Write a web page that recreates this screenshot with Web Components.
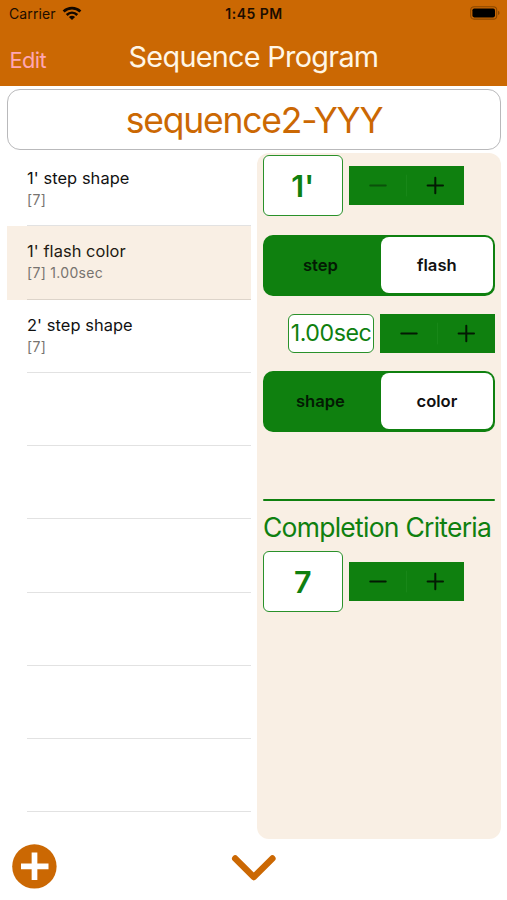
<!DOCTYPE html>
<html lang="en">
<head>
<meta charset="utf-8">
<title>Sequence Program</title>
<style>
  html, body { margin: 0; height: 100%; background: #fff; }
  body { font-family: Inter, "Liberation Sans", sans-serif; overflow: hidden; }
</style>
</head>
<body>
<sequence-app></sequence-app>
<script>
const define = (name, html) => {
  const template = document.createElement('template');
  template.innerHTML = html;
  customElements.define(name, class extends HTMLElement {
    constructor() {
      super();
      this.attachShadow({ mode: 'open' }).append(template.content.cloneNode(true));
    }
  });
};

define('status-bar', `
<style>
  :host { display: grid; grid-template-columns: 1fr auto 1fr; align-items: center; height: 27px; padding: 0 7px 0 9px; color: #1b0d00; font-size: 14px; line-height: 27px; box-sizing: border-box; }
  .left { display: flex; align-items: center; gap: 6px; letter-spacing: .1px; }
  .left svg { margin-top: -1px; }
  .time { font-weight: 600; font-size: 14px; letter-spacing: .5px; margin-right: 1px; }
  .battery { justify-self: end; margin-top: -1px; }
  svg { display: block; }
</style>
<div class="left"><span>Carrier</span>
  <svg width="20" height="15" viewBox="0 0 20 15" fill="none" stroke="#120800" stroke-width="2.7">
    <path d="M1.6 5.4C6.5 .9 13.5 .9 18.4 5.4"/><path d="M4.7 8.9C7.8 6 12.2 6 15.3 8.9"/>
    <path d="M10 14 6.9 10.9Q10 8.4 13.1 10.9Z" fill="#120800" stroke="none"/>
  </svg></div>
<span class="time">1:45 PM</span>
<svg class="battery" width="30" height="14" viewBox="0 0 30 14">
  <rect x=".7" y=".7" width="26" height="12.4" rx="3.4" fill="none" stroke="#8a4700" stroke-width="1.1"/>
  <rect x="2.4" y="2.4" width="22.6" height="9" rx="1.8" fill="#000"/>
  <path d="M28 4.7q1.6.6 1.6 2.2T28 9.1z" fill="#8a4700"/>
</svg>`);

define('nav-bar', `
<style>
  :host { display: grid; grid-template-columns: 1fr auto 1fr; height: 59px; box-sizing: border-box; padding: 0 10px; color: #fff6e6; }
  .edit { color: #ffa6b4; font-size: 21.8px; line-height: 66px; letter-spacing: -.6px; margin-left: -.5px; }
  .title { font-size: 28.8px; line-height: 59px; white-space: nowrap; letter-spacing: -.7px; }
</style>
<span class="edit"><slot name="action"></slot></span><span class="title"><slot></slot></span><span></span>`);

define('name-field', `
<style>
  :host { display: block; box-sizing: border-box; height: 61px; margin: 3px 6px 0 7px; border: 1.5px solid #b9b9bb; border-radius: 13px; background: #fff; color: #cb6803; font-size: 35.5px; line-height: 61px; letter-spacing: -1.2px; text-align: center; white-space: nowrap; }
</style><slot></slot>`);

define('step-row', `
<style>
  :host { display: flex; height: 73.25px; box-sizing: border-box; padding-left: 20px; color: #111; }
  :host([selected]) { background: #f9efe4; color: #221a12; }
  .body { flex: 1; box-sizing: border-box; padding-top: 14px; border-bottom: 1px solid #e2e2e2; }
  :host([selected]) .body { border-color: #ddd4ca; }
  .title { font-size: 16.4px; line-height: 22px; letter-spacing: .08px; }
  .detail { font-size: 14px; line-height: 22px; letter-spacing: .3px; color: #77736f; }
</style>
<div class="body"><div class="title"><slot></slot></div><div class="detail"><slot name="detail"></slot></div></div>`);

define('value-box', `
<style>
  :host { display: block; box-sizing: border-box; width: 79.5px; height: 61px; border: 1.5px solid #2a912a; border-radius: 6px; background: #fff; color: #0f800f; font-size: 30.5px; font-weight: 600; line-height: 59px; text-align: center; white-space: nowrap; }
  :host([compact]) { width: 86px; height: 39px; font-size: 23.2px; font-weight: 400; line-height: 37px; letter-spacing: -.45px; }
</style><slot></slot>`);

define('value-stepper', `
<style>
  :host { display: block; width: 115px; height: 39px; background: #0f800f; }
  svg { display: block; }
  path { stroke: #031a03; stroke-width: 2; stroke-linecap: round; }
  .divider { stroke: #188718; stroke-width: 1; }
  :host([at-minimum]) .minus { stroke: #0b510b; }
</style>
<svg width="115" height="39" viewBox="0 0 115 39" fill="none">
  <path class="divider" d="M57.5 9V30"/><path class="minus" d="M21.3 19.5H36.7"/><path d="M78.6 19.5H94M86.3 11.8V27.2"/>
</svg>`);

define('segmented-control', `
<style>
  :host { display: grid; grid-template-columns: 1fr 1fr; box-sizing: border-box; width: 232px; height: 61px; padding: 2.5px 2.5px 2.5px 0; border-radius: 10px; background: #0f800f; font-size: 16.6px; font-weight: 600; line-height: 56px; text-align: center; }
  .off { color: #031a03; }
  .on { color: #111; background: #fff; border-radius: 8px; margin-left: 3.5px; }
</style>
<span class="off"><slot name="off"></slot></span><span class="on"><slot></slot></span>`);

define('criteria-panel', `
<style>
  :host { display: flex; flex-direction: column; box-sizing: border-box; width: 244px; height: 686px; padding: 2px 6px 0; border-radius: 12px; background: #f9efe4; color: #0f800f; }
  .row { display: flex; align-items: center; gap: 6px; }
  .delay { justify-content: flex-end; margin: 18px 0; }
  .first { margin-bottom: 18.5px; }
  hr { width: 100%; height: 2.5px; margin: 67px 0 0; border: 0; border-radius: 1px; background: #0f800f; }
  .heading { height: 49.5px; font-size: 26.5px; line-height: 52px; white-space: nowrap; letter-spacing: -.75px; }
</style>
<div class="row first"><value-box>1'</value-box><value-stepper at-minimum></value-stepper></div>
<segmented-control><span slot="off">step</span>flash</segmented-control>
<div class="row delay"><value-box compact>1.00sec</value-box><value-stepper></value-stepper></div>
<segmented-control><span slot="off">shape</span>color</segmented-control>
<hr>
<div class="heading">Completion Criteria</div>
<div class="row"><value-box>7</value-box><value-stepper></value-stepper></div>`);

define('tool-bar', `
<style>
  :host { display: grid; grid-template-columns: 1fr auto 1fr; align-items: center; height: 55px; padding: 0 0 0 12px; margin-right: 11px; }
  svg { display: block; }
</style>
<svg width="45" height="45" viewBox="0 0 45 45"><circle cx="22.4" cy="22.4" r="22.2" fill="#cb6803"/><path d="M22.5 8.5V36M9 22.4H36.5" stroke="#fff" stroke-width="5.7"/></svg>
<svg width="46" height="28" viewBox="0 0 46 28" fill="none" stroke="#cb6803" stroke-width="6.4" stroke-linecap="round" stroke-linejoin="round"><path d="M4.2 5.5 22.8 24 41.4 5.5"/></svg>
<span></span>`);

define('sequence-app', `
<style>
  :host { display: flex; flex-direction: column; height: 900px; background: #fff; }
  header { background: #cb6803; height: 86px; }
  main { display: flex; gap: 6px; padding: 3px 6px 0 7px; height: 686px; }
  .list { width: 244px; }
</style>
<header><status-bar></status-bar><nav-bar><span slot="action">Edit</span>Sequence Program</nav-bar></header>
<name-field>sequence2-YYY</name-field>
<main>
  <div class="list">
    <step-row>1' step shape<span slot="detail">[7]</span></step-row>
    <step-row selected>1' flash color<span slot="detail">[7] 1.00sec</span></step-row>
    <step-row>2' step shape<span slot="detail">[7]</span></step-row>
    <step-row></step-row><step-row></step-row><step-row></step-row>
    <step-row></step-row><step-row></step-row><step-row></step-row>
  </div>
  <criteria-panel></criteria-panel>
</main>
<tool-bar></tool-bar>`);
</script>
</body>
</html>
